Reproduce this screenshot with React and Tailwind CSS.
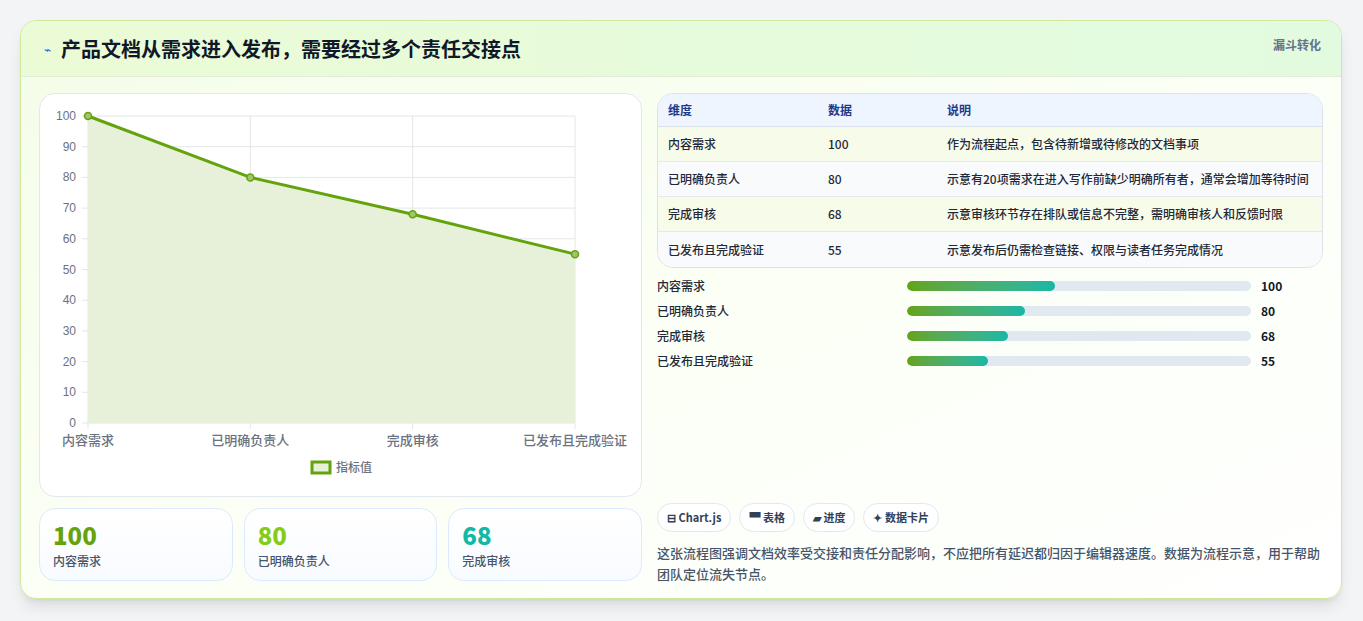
import React from 'react';

const rows = [
  { name: '内容需求', v: 100, note: '作为流程起点，包含待新增或待修改的文档事项', bg: 'bg-[#f7fbea]' },
  { name: '已明确负责人', v: 80, note: '示意有20项需求在进入写作前缺少明确所有者，通常会增加等待时间', bg: 'bg-[#f8fafc]' },
  { name: '完成审核', v: 68, note: '示意审核环节存在排队或信息不完整，需明确审核人和反馈时限', bg: 'bg-[#f7fbea]' },
  { name: '已发布且完成验证', v: 55, note: '示意发布后仍需检查链接、权限与读者任务完成情况', bg: 'bg-[#f8fafc]' },
];

function Chart() {
  const x0 = 48, x1 = 535, y0 = 22, y1 = 329;
  const px = (i) => x0 + (i * (x1 - x0)) / 3;
  const py = (v) => y1 - (v / 100) * (y1 - y0);
  const pts = rows.map((r, i) => [px(i), py(r.v)]);
  const line = pts.map((p) => p.join(',')).join(' ');
  return (
    <svg width="602" height="403" className="block">
      {Array.from({ length: 11 }, (_, i) => {
        const v = i * 10;
        const y = py(v);
        return (
          <g key={v}>
            <line x1={x0 - 6} x2={x1} y1={y} y2={y} stroke="#e3e6ea" />
            <text x={x0 - 12} y={y + 4} textAnchor="end" fontSize="12" fill="#6b7280" fontFamily="Liberation Sans, sans-serif">{v}</text>
          </g>
        );
      })}
      {[0, 1, 2, 3].map((i) => (
        <line key={i} x1={px(i)} x2={px(i)} y1={y0} y2={y1 + 6} stroke="#e3e6ea" />
      ))}
      <polygon points={`${x0},${y1} ${line} ${x1},${y1}`} fill="#e7f0d8" />
      <polyline points={line} fill="none" stroke="#65a30d" strokeWidth="3" />
      {pts.map(([x, y], i) => (
        <circle key={i} cx={x} cy={y} r="3.5" fill="#a3c46a" stroke="#65a30d" strokeWidth="1.5" />
      ))}
      {rows.map((r, i) => (
        <text key={r.name} x={px(i)} y={351} textAnchor="middle" fontSize="13" fontWeight="500" fill="#6b7280" fontFamily="Noto Sans CJK SC, sans-serif">{r.name}</text>
      ))}
      <rect x="272" y="368" width="18" height="11" fill="#e7f0d8" stroke="#65a30d" strokeWidth="3" />
      <text x="296" y="378" fontSize="12" fontWeight="500" fill="#6b7280" fontFamily="Noto Sans CJK SC, sans-serif">指标值</text>
    </svg>
  );
}

export default function App() {
  return (
    <div className="min-h-[621px] bg-[#f3f4f6] pt-5 px-[20px]" style={{ fontFamily: '"Noto Sans CJK SC", "Noto Sans", sans-serif' }}>
      <div className="w-[1322px] h-[579px] rounded-2xl border border-[#cdeb9a] bg-gradient-to-br from-[#f4fde8] via-[#fbfff5] to-white shadow-lg overflow-hidden">
        <div className="h-[56px] flex items-start justify-between px-5 border-b border-[#e3ecd6] bg-gradient-to-r from-[#ebfbd6] to-[#e2fbe0]">
          <div className="flex items-center gap-[10px] h-full pl-[3px]">
            <span className="text-[#2563eb] text-xs">⌁</span>
            <h1 className="text-[20px] font-bold text-[#111827]">产品文档从需求进入发布，需要经过多个责任交接点</h1>
          </div>
          <span className="text-xs font-bold text-[#64748b] mt-4">漏斗转化</span>
        </div>
        <div className="flex gap-[15px] px-[18px] pt-4">
          <div className="w-[603px] flex flex-col gap-[11px]">
            <div className="h-[404px] rounded-2xl border border-[#e2e8f0] bg-white">
              <Chart />
            </div>
            <div className="grid grid-cols-3 gap-[11px]">
              {[['100', 'text-[#65a30d]', '内容需求'], ['80', 'text-[#84cc16]', '已明确负责人'], ['68', 'text-[#14b8a6]', '完成审核']].map(([v, c, l]) => (
                <div key={l} className="h-[73px] rounded-2xl border border-[#dbeafe] bg-gradient-to-b from-white to-[#f8fbff] px-[13px] pt-[12px]">
                  <div className={`text-[24px] font-black leading-7 ${c}`}>{v}</div>
                  <div className="text-xs font-medium text-[#475569] mt-1">{l}</div>
                </div>
              ))}
            </div>
          </div>
          <div className="w-[667px] flex flex-col">
            <div className="rounded-2xl border border-[#dbe2ea] overflow-hidden text-xs">
              <div className="flex h-[33px] items-center bg-[#eef5ff] font-bold text-[#1e3a8a] border-b border-[#dbe2ea]">
                <span className="w-[170px] pl-[10px]">维度</span>
                <span className="w-[119px]">数据</span>
                <span>说明</span>
              </div>
              {rows.map((r, i) => (
                <div key={r.name} className={`flex h-[35px] items-center font-medium text-[#1f2937] ${r.bg} ${i < 3 ? 'border-b border-[#e5e9ef]' : ''}`}>
                  <span className="w-[170px] pl-[10px]">{r.name}</span>
                  <span className="w-[119px]">{r.v}</span>
                  <span>{r.note}</span>
                </div>
              ))}
            </div>
            <div className="flex flex-col gap-[7px] mt-[9px]">
              {rows.map((r) => (
                <div key={r.name} className="flex items-center h-[18px] text-xs">
                  <span className="w-[250px] font-medium text-[#1f2937]">{r.name}</span>
                  <div className="w-[344px] h-[10px] rounded-full bg-[#e2e8f0] overflow-hidden">
                    <div className="h-full rounded-full bg-gradient-to-r from-[#65a30d] to-[#14b8a6]" style={{ width: `${r.v * 0.43}%` }} />
                  </div>
                  <span className="ml-[10px] font-bold text-[#111827]">{r.v}</span>
                </div>
              ))}
            </div>
            <div className="flex gap-2 mt-[133px]">
              {['⊟ Chart.js', '▀ 表格', '▰ 进度', '✦ 数据卡片'].map((t) => (
                <span key={t} className="h-[29px] px-[9px] rounded-full border border-[#e2e8f0] bg-white flex items-center text-[11px] font-bold text-[#334155]">{t}</span>
              ))}
            </div>
            <p className="mt-[10px] text-[13px] font-medium leading-[21px] text-[#475569]">这张流程图强调文档效率受交接和责任分配影响，不应把所有延迟都归因于编辑器速度。数据为流程示意，用于帮助团队定位流失节点。</p>
          </div>
        </div>
      </div>
    </div>
  );
}
